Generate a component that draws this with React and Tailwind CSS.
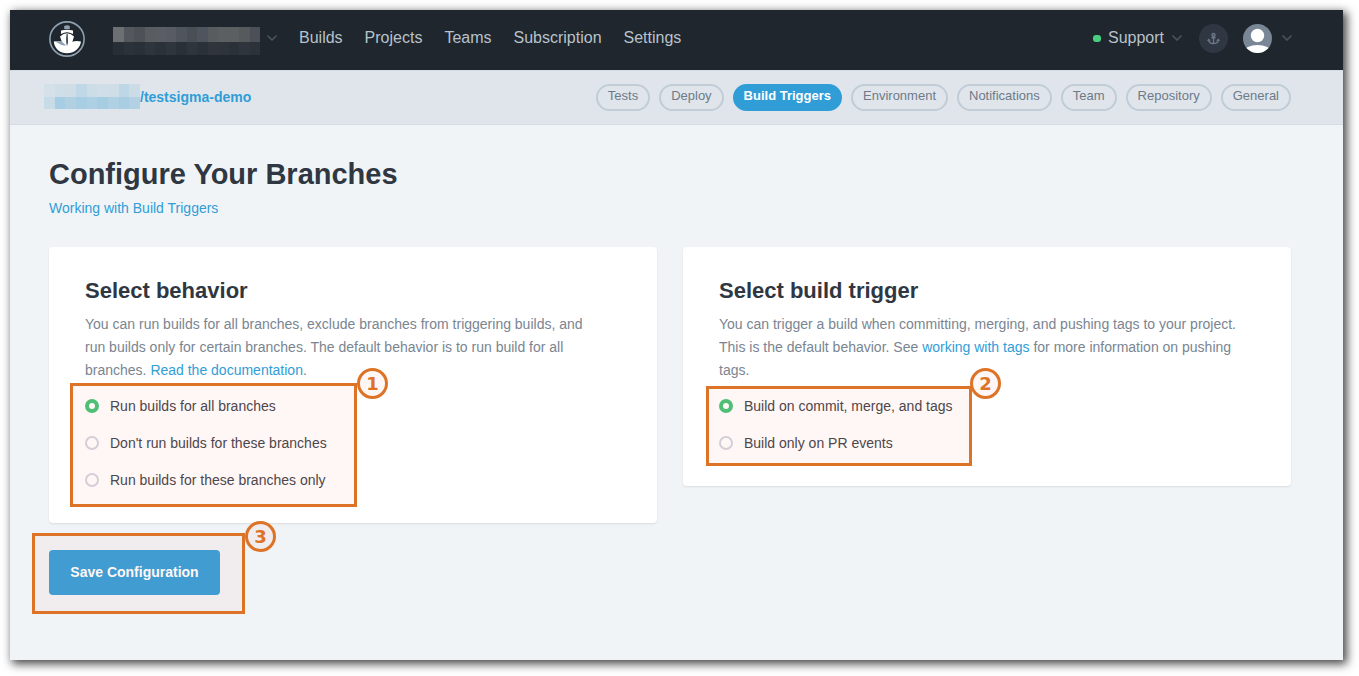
import { useState } from 'react'
import { ChevronDown } from 'lucide-react'
import { FaAnchor } from 'react-icons/fa'

const NAV = ['Builds', 'Projects', 'Teams', 'Subscription', 'Settings']

const TABS = [
  'Tests',
  'Deploy',
  'Build Triggers',
  'Environment',
  'Notifications',
  'Team',
  'Repository',
  'General',
]

const BEHAVIORS = [
  'Run builds for all branches',
  "Don't run builds for these branches",
  'Run builds for these branches only',
]

const TRIGGERS = ['Build on commit, merge, and tags', 'Build only on PR events']

// Two rows of blocks covering the account name
const ACCOUNT_TOP = [
  '#6d7073', '#54585e', '#4e5256', '#595c60', '#5a5d63', '#585b63', '#50545d',
  '#4a4e55', '#50545e', '#595c5f', '#5c5f61', '#5c5f60', '#575a5d', '#4b4f57',
]
const ACCOUNT_BOTTOM = [
  '#282e36', '#2c323a', '#2a3037', '#2f353d', '#2b3139', '#2f353c', '#2a3037',
  '#2f353c', '#2b3138', '#2f353b', '#2e343a', '#2b3138', '#2f353c', '#2c3238',
]
const OWNER_TOP = [
  '#d5e1e8', '#d0dee7', '#cfdde6', '#bfd7e6', '#cddde7', '#d0dfe7', '#cfdee6', '#bed7e6', '#cbdce6',
]
const OWNER_BOTTOM = [
  '#c8dce7', '#a6cde3', '#b1d1e3', '#a8cee3', '#add0e4', '#a7cde3', '#b0d1e3', '#a9cee3', '#b2d2e4',
]

function Blocks({ top, bottom, className }) {
  return (
    <span aria-hidden className={`flex flex-col ${className}`}>
      <span className="flex flex-[7]">
        {top.map((c, i) => (
          <span key={i} className="flex-1" style={{ backgroundColor: c }} />
        ))}
      </span>
      <span className="flex flex-[6]">
        {bottom.map((c, i) => (
          <span key={i} className="flex-1" style={{ backgroundColor: c }} />
        ))}
      </span>
    </span>
  )
}

function Logo() {
  return (
    <svg width="36" height="36" viewBox="0 0 36 36" aria-hidden>
      <circle cx="18" cy="18" r="17.1" fill="none" stroke="#8fa0b0" strokeWidth="1.6" />
      <path d="M15.2 5q2.8-1.400 5.600 0v3h-5.600z" fill="#8fa0b0" />
      <path d="M12 9.500q6-1.500 12 0v3.500q-6-3.400-12 0z" fill="#fff" />
      <path
        d="M4.800 20.500q4.500-1.200 8 .3L11 15.500Q18 9 25 15.500L23.400 20.800q3.800-1.500 8.600-.3-.6 5-4.700 8.500-4 3.200-9.300 3.200T8.800 29q-3.600-3.500-4-8.500z"
        fill="#fff"
      />
      <path d="M5.500 20.400q5-1 8 .8l3.500 3q-2.500.6-5.500-.8-2.500-2-6-3z" fill="#8fa0b0" />
      <path d="M17.600 12.500h1.100l.3 9-1 3.500q-1-3-.9-7z" fill="#3a444e" />
    </svg>
  )
}

function Avatar() {
  return (
    <svg width="29" height="29" viewBox="0 0 29 29" aria-hidden>
      <defs>
        <clipPath id="avatar">
          <circle cx="14.5" cy="14.5" r="14.5" />
        </clipPath>
      </defs>
      <g clipPath="url(#avatar)">
        <rect width="29" height="29" fill="#788695" />
        <circle cx="14.5" cy="11.5" r="6.7" fill="#fff" />
        <ellipse cx="14.5" cy="27.5" rx="13.5" ry="6.5" fill="#fff" />
      </g>
    </svg>
  )
}

function Caret() {
  return <ChevronDown size={16} strokeWidth={2.5} className="text-[#4b545e]" />
}

/** Outlined region with a numbered circle hanging off its top right corner. */
function Callout({ n, className, badgeClassName }) {
  return (
    <div className={`pointer-events-none absolute border-3 border-[#dd7326] bg-[#ff9d90]/8 ${className}`}>
      <span
        className={`absolute left-full flex size-[31px] items-center justify-center rounded-full border-3 border-[#dd7326] bg-[#ff9d90]/8 font-['DejaVu_Sans',sans-serif] text-[18px] leading-none font-bold text-[#dd7326] ${badgeClassName}`}
      >
        {n}
      </span>
    </div>
  )
}

function RadioGroup({ name, label, options, callout }) {
  const [selected, setSelected] = useState(options[0])

  return (
    <div role="radiogroup" aria-label={label} className="relative mt-[6px] flex flex-col gap-px">
      {options.map((option) => (
        <label key={option} className="flex h-9 items-center gap-[11px] text-[#3d4045]">
          <input
            type="radio"
            name={name}
            checked={selected === option}
            onChange={() => setSelected(option)}
            className="size-[14px] appearance-none rounded-full border-2 border-[#d0d4dd] checked:border-4 checked:border-[#41c375] checked:bg-white"
          />
          {option}
        </label>
      ))}
      {callout}
    </div>
  )
}

function Card({ title, children }) {
  return (
    <section className="rounded-[4px] bg-white px-9 pt-7 pb-[25px] shadow-[0_1px_2px_#00000018]">
      <h2 className="text-[22px] leading-8 font-bold text-[#2f3742]">{title}</h2>
      {children}
    </section>
  )
}

export default function App() {
  const [tab, setTab] = useState('Build Triggers')

  return (
    <div className="flex min-h-screen bg-white pt-[10px] pr-4 pb-4 pl-[10px] font-['Liberation_Sans',Arial,sans-serif] text-[14px]">
      <div className="flex-1 bg-[#f0f4f7] shadow-[3px_3px_9px_1px_#000000b8]">
        <header className="flex h-[60px] items-center bg-[#1f262d] pr-12 pb-1 pl-[39px] text-[16px] text-[#b8c2cc]">
          <a href="#" aria-label="Home" className="mt-[2px]">
            <Logo />
          </a>
          <button type="button" aria-label="Switch account" className="ml-7 flex items-center gap-1">
            <Blocks top={ACCOUNT_TOP} bottom={ACCOUNT_BOTTOM} className="mt-[6px] h-7 w-[147px]" />
            <Caret />
          </button>
          <nav className="ml-[19px] flex gap-[22px]">
            {NAV.map((item) => (
              <a key={item} href="#">
                {item}
              </a>
            ))}
          </nav>
          <div className="ml-auto flex items-center">
            <button type="button" className="flex items-center">
              <span className="mr-[7px] h-[7px] w-2 rounded-[3px] bg-[#48d080]" />
              <span className="mr-[5px]">Support</span>
              <Caret />
            </button>
            <button
              type="button"
              aria-label="Ship"
              className="ml-[14px] flex size-[29px] items-center justify-center rounded-full bg-[#2f3742] text-[#6b7785]"
            >
              <FaAnchor size={13} />
            </button>
            <button type="button" aria-label="Profile" className="ml-[15px] flex items-center gap-[7px]">
              <Avatar />
              <Caret />
            </button>
          </div>
        </header>

        <div className="flex h-[55px] items-center justify-between border-y border-t-[#d6dbe3] border-b-[#d5dce4] bg-[#e0e5ec] pr-[52px] pl-[34px]">
          <a href="#" className="flex items-center font-bold text-[#309dd7]">
            <Blocks top={OWNER_TOP} bottom={OWNER_BOTTOM} className="-mt-[3px] h-[25px] w-24" />
            /testsigma-demo
          </a>
          <nav className="flex gap-[9px] text-[13px]">
            {TABS.map((item) => (
              <button
                key={item}
                type="button"
                onClick={() => setTab(item)}
                className={`flex h-[27px] items-center rounded-full border-2 pb-[3px] ${
                  item === tab
                    ? 'border-[#309dd7] bg-[#309dd7] px-[9px] font-bold text-white'
                    : 'border-[#c0ccd6] px-[10px] text-[#6d7a88]'
                }`}
              >
                {item}
              </button>
            ))}
          </nav>
        </div>

        <main className="pt-[31px] pr-[52px] pb-[65px] pl-[39px]">
          <h1 className="text-[29px] leading-9 font-bold text-[#2f3742]">Configure Your Branches</h1>
          <a href="#" className="mt-[5px] block w-fit leading-[23px] text-[#309dd7]">
            Working with Build Triggers
          </a>

          <form onSubmit={(e) => e.preventDefault()}>
            <div className="mt-[27px] grid grid-cols-2 items-start gap-[26px]">
              <Card title="Select behavior">
                <p className="mt-[6px] max-w-[514px] leading-[23px] text-[#7a8591]">
                  You can run builds for all branches, exclude branches from triggering builds, and run
                  builds only for certain branches. The default behavior is to run build for all branches.{' '}
                  <a href="#" className="text-[#309dd7]">
                    Read the documentation
                  </a>
                  .
                </p>
                <RadioGroup
                  name="behavior"
                  label="Branch behavior"
                  options={BEHAVIORS}
                  callout={
                    <Callout
                      n={1}
                      className="-top-[5px] -left-[15px] h-[124px] w-[287px]"
                      badgeClassName="-top-[18px] ml-[3px]"
                    />
                  }
                />
              </Card>
              <Card title="Select build trigger">
                <p className="mt-[6px] max-w-[532px] leading-[23px] text-[#7a8591]">
                  You can trigger a build when committing, merging, and pushing tags to your project. This
                  is the default behavior. See{' '}
                  <a href="#" className="text-[#309dd7]">
                    working with tags
                  </a>{' '}
                  for more information on pushing tags.
                </p>
                <RadioGroup
                  name="trigger"
                  label="Build trigger"
                  options={TRIGGERS}
                  callout={
                    <Callout
                      n={2}
                      className="-top-[2px] -left-[13px] h-20 w-[266px]"
                      badgeClassName="-top-[21px] ml-px"
                    />
                  }
                />
              </Card>
            </div>

            <div className="relative mt-[27px] w-fit">
              <button
                type="submit"
                className="h-[45px] w-[171px] rounded-[4px] bg-[#309dd7] font-bold text-white"
              >
                Save Configuration
              </button>
              <Callout
                n={3}
                className="-top-[17px] -left-[17px] h-[81px] w-[213px]"
                badgeClassName="-top-[15px] ml-[3px]"
              />
            </div>
          </form>
        </main>
      </div>
    </div>
  )
}
